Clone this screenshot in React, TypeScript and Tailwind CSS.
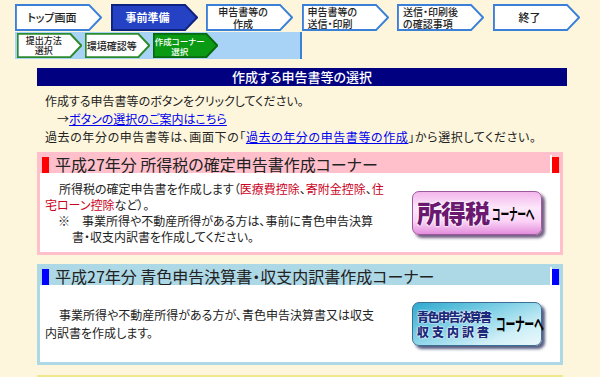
import React from "react";

const jp = "font-['Noto_Sans_CJK_JP','Noto_Sans',sans-serif]";

type StepProps = {
  size: string;
  fill: string;
  stroke: string;
  text: string;
  children: React.ReactNode;
  tip: number;
};

const Step = ({ size, fill, stroke, text, children, tip }: StepProps) => (
  <div className={`relative flex shrink-0 items-center ${size}`}>
    <svg className="absolute inset-0 h-full w-full" viewBox="0 0 100 30" preserveAspectRatio="none">
      <polygon points={`1,1 ${100 - tip},1 99,15 ${100 - tip},29 1,29`} fill={fill} stroke={stroke} strokeWidth="2" vectorEffect="non-scaling-stroke" />
    </svg>
    <div className={`relative flex h-full items-center justify-center whitespace-nowrap text-center ${text}`} style={{ width: `${100 - tip}%` }}>
      {children}
    </div>
  </div>
);

const Mark = ({ color }: { color: string }) => <span className={`h-[16px] w-[7px] shrink-0 self-end ${color}`} />;

const App = () => (
  <div className={`min-h-[377px] w-[600px] overflow-hidden bg-[#fdf6dc] ${jp} [font-feature-settings:'palt'] text-[#222]`}>
    {/* progress steps */}
    <div className="flex gap-[8.5px] pl-[15px] pt-[4px]">
      <Step size="w-[87px] h-[27px]" fill="#fff" stroke="#3a7fd8" tip={15} text="text-[11px] font-medium text-[#222]">トップ画面</Step>
      <Step size="w-[87px] h-[27px]" fill="#2542c4" stroke="#0f2280" tip={15} text="text-[11px] font-bold text-white">事前準備</Step>
      <Step size="w-[87px] h-[27px]" fill="#fff" stroke="#3a7fd8" tip={15} text="text-[10px] leading-[12px] font-medium text-[#222]">申告書等の<br />作成</Step>
      <Step size="w-[87px] h-[27px]" fill="#fff" stroke="#3a7fd8" tip={15} text="text-[10px] leading-[12px] font-medium text-[#222] text-left pl-[6px] justify-start">申告書等の<br />送信・印刷</Step>
      <Step size="w-[87px] h-[27px]" fill="#fff" stroke="#3a7fd8" tip={15} text="text-[10px] leading-[12px] font-medium text-[#222] text-left pl-[6px] justify-start">送信・印刷後<br />の確認事項</Step>
      <Step size="w-[87px] h-[27px]" fill="#fff" stroke="#3a7fd8" tip={15} text="text-[11px] font-medium text-[#222]">終了</Step>
    </div>
    <div className="ml-[15px] mt-[1px] flex h-[27px] w-[287px] items-center gap-[3px] border-r-2 border-[#3a7fd8] bg-[#a9d3f6] pl-[2px]">
      <Step size="w-[65px] h-[25px]" fill="#fff" stroke="#2c8a2c" tip={18} text="text-[9px] leading-[10px] font-medium text-[#222]">提出方法<br />選択</Step>
      <Step size="w-[65px] h-[25px]" fill="#fff" stroke="#2c8a2c" tip={18} text="text-[10px] font-medium text-[#222]">環境確認等</Step>
      <Step size="w-[65px] h-[25px]" fill="#0b9a14" stroke="#0a6a10" tip={18} text="text-[8.5px] leading-[10px] font-medium text-white">作成コーナー<br />選択</Step>
    </div>

    <div className="ml-[37px] w-[530px]">
      <div className="mt-[9px] flex h-[18px] items-center justify-center bg-[#000080] text-[13px] font-medium text-white">
        作成する申告書等の選択
      </div>
      <div className="mt-[6px] pl-[8px] text-[12px] leading-[18px]">
        <p>作成する申告書等のボタンをクリックしてください。</p>
        <p className="pl-[12px]">
          →<span className="text-[#0000ee] underline">ボタンの選択のご案内はこちら</span>
        </p>
        <p className="tracking-[0.6px]">
          過去の年分の申告書等は、画面下の「<span className="text-[#0000ee] underline">過去の年分の申告書等の作成</span>」から選択してください。
        </p>
      </div>
    </div>

    <div className="ml-[37px] w-[526px]">
      {/* 所得税 */}
      <div className="mt-[6px] border-[3px] border-[#ffc0cb] bg-white">
        <div className="flex h-[18px] items-center bg-[#ffc0cb] pl-[2px] pr-[1px]">
          <Mark color="bg-[#ff0000]" />
          <span className="ml-[6px] text-[16px] leading-[18px]">平成27年分 所得税の確定申告書作成コーナー</span>
          <span className="ml-auto self-stretch w-[2px] bg-white" />
          <Mark color="bg-[#ff0000]" />
        </div>
        <div className="flex h-[79px] items-center">
          <div className="w-[372px] pl-[5px] text-[12px] leading-[16px]">
            <p className="pl-[14px]">
              所得税の確定申告書を作成します（<span className="text-[#cc0022]">医療費控除</span>、<span className="text-[#cc0022]">寄附金控除</span>、<span className="text-[#cc0022]">住</span>
            </p>
            <p>
              <span className="text-[#cc0022]">宅ローン控除</span>など）。
            </p>
            <p className="pl-[13px]">※　事業所得や不動産所得がある方は、事前に青色申告決算</p>
            <p className="pl-[27px]">書・収支内訳書を作成してください。</p>
          </div>
          <div className="flex h-[44px] w-[130px] items-center rounded-[7px] border border-[#9c5a9c] bg-[linear-gradient(180deg,#f3b6ec_0%,#fde7fb_38%,#fad2f6_70%,#e48ddc_100%)] pl-[4px] shadow-[3px_3px_3px_rgba(70,40,90,0.75)]">
            <span className="text-[25px] font-black leading-none tracking-[-1px] text-[#6b1870] [text-shadow:0_0_2px_#fff,0_0_2px_#fff,0_0_2px_#fff]">所得税</span>
            <span className="ml-[3px] w-[44px] overflow-visible">
              <span className="inline-block origin-left scale-x-[0.55] whitespace-nowrap text-[16px] font-bold leading-none text-black">コーナーへ</span>
            </span>
          </div>
        </div>
      </div>

      {/* 青色申告決算書 */}
      <div className="mt-[9px] border-[3px] border-[#add8e6] bg-white">
        <div className="flex h-[18px] items-center bg-[#add8e6] pl-[2px] pr-[1px]">
          <Mark color="bg-[#0000ff]" />
          <span className="ml-[6px] text-[16px] leading-[18px]">平成27年分 青色申告決算書・収支内訳書作成コーナー</span>
          <span className="ml-auto self-stretch w-[2px] bg-white" />
          <Mark color="bg-[#0000ff]" />
        </div>
        <div className="flex h-[77px] items-center">
          <div className="w-[372px] pl-[5px] text-[12px] leading-[18px]">
            <p className="pl-[14px]">事業所得や不動産所得がある方が、青色申告決算書又は収支</p>
            <p>内訳書を作成します。</p>
          </div>
          <div className="flex h-[44px] w-[130px] items-center rounded-[7px] border border-[#3b6f96] bg-[linear-gradient(160deg,#2fa9cf_0%,#7fd0e6_40%,#cfeff7_75%,#eaf8fb_100%)] pl-[4px] shadow-[3px_3px_3px_rgba(30,40,90,0.75)]">
            <div className="flex flex-col text-[12px] font-black leading-[15px] text-[#1b2a7a] [text-shadow:0_0_2px_#fff,0_0_2px_#fff]">
              <span className="tracking-[-1.5px]">青色申告決算書</span>
              <span className="tracking-[3px]">収支内訳書</span>
            </div>
            <span className="ml-[4px] w-[44px]">
              <span className="inline-block origin-left scale-x-[0.55] whitespace-nowrap text-[18px] font-bold leading-none text-black">コーナーへ</span>
            </span>
          </div>
        </div>
      </div>

      <div className="mt-[10px] h-[20px] border-[3px] border-[#f0e68c] bg-white" />
    </div>
  </div>
);

export default App;
